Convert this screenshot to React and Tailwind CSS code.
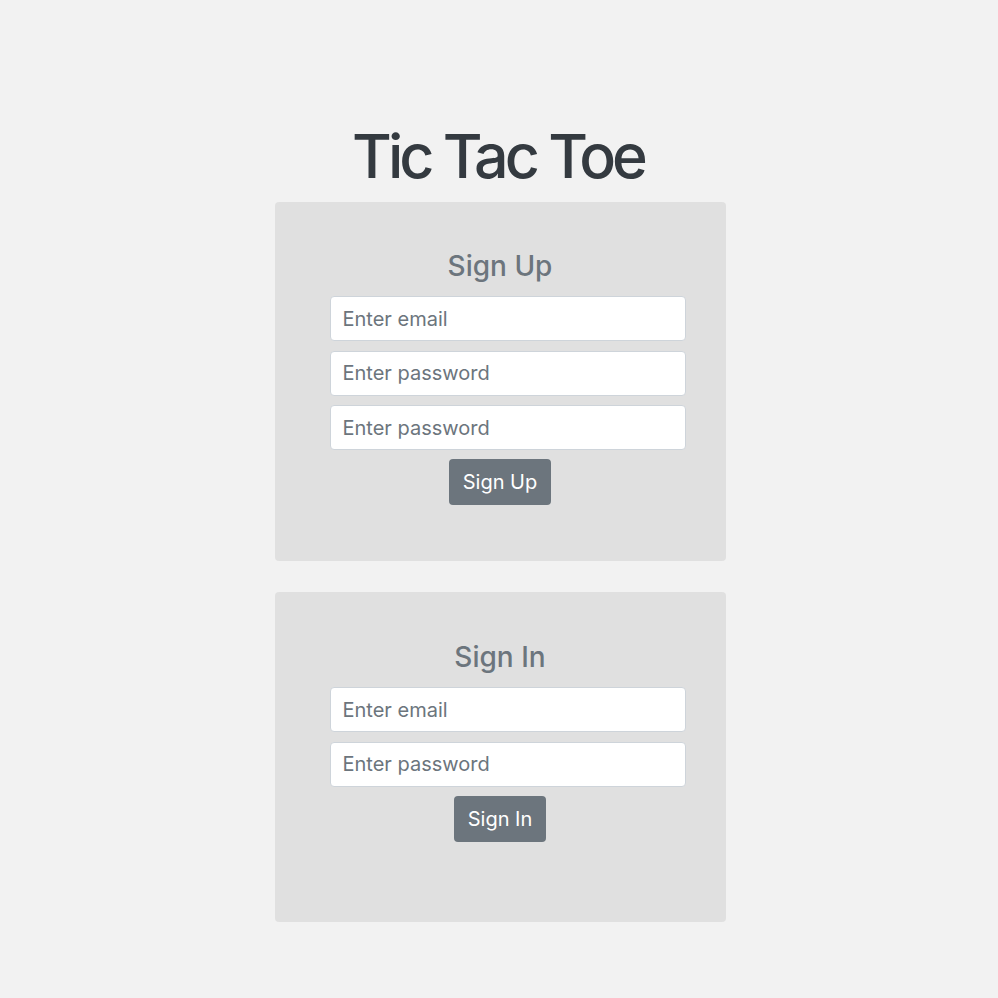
import React from 'react';

const inputCls =
  'w-full h-[45px] rounded-[4px] border border-[#ced4da] bg-white px-3 text-[20px] text-[#495057] placeholder:text-[#6c757d] outline-none';

const AuthCard = ({ title, fields, button, heightCls, padTop }) => (
  <div className={`w-[451px] rounded-[4px] bg-[#e0e0e0] flex flex-col items-center ${heightCls} ${padTop}`}>
    <h2 className="text-[28px] leading-[34px] font-medium text-[#6c757d]">{title}</h2>
    <div className="mt-[13px] w-[356px] self-start ml-[55px] flex flex-col gap-[9.5px]">
      {fields.map((f, i) => (
        <input key={i} type={f.type} placeholder={f.placeholder} className={inputCls} />
      ))}
    </div>
    <button className="mt-[9px] h-[46px] px-[14px] rounded-[4px] bg-[#6c757d] text-white text-[20px]">
      {button}
    </button>
  </div>
);

export default function App() {
  return (
    <div
      className="min-h-screen bg-[#f2f2f2] flex flex-col items-center pt-[118px] pl-[2px]"
      style={{ fontFamily: 'Inter, "Noto Sans", sans-serif' }}
    >
      <h1 className="pr-[4px] text-[61px] leading-[76px] font-medium text-[#343a40] tracking-[-4px]">Tic Tac Toe</h1>
      <div className="mt-[8px]">
        <AuthCard
          title="Sign Up"
          heightCls="h-[359px]"
          padTop="pt-[47px]"
          fields={[
            { type: 'email', placeholder: 'Enter email' },
            { type: 'password', placeholder: 'Enter password' },
            { type: 'password', placeholder: 'Enter password' },
          ]}
          button="Sign Up"
        />
      </div>
      <div className="mt-[31px]">
        <AuthCard
          title="Sign In"
          heightCls="h-[330px]"
          padTop="pt-[48px]"
          fields={[
            { type: 'email', placeholder: 'Enter email' },
            { type: 'password', placeholder: 'Enter password' },
          ]}
          button="Sign In"
        />
      </div>
    </div>
  );
}
